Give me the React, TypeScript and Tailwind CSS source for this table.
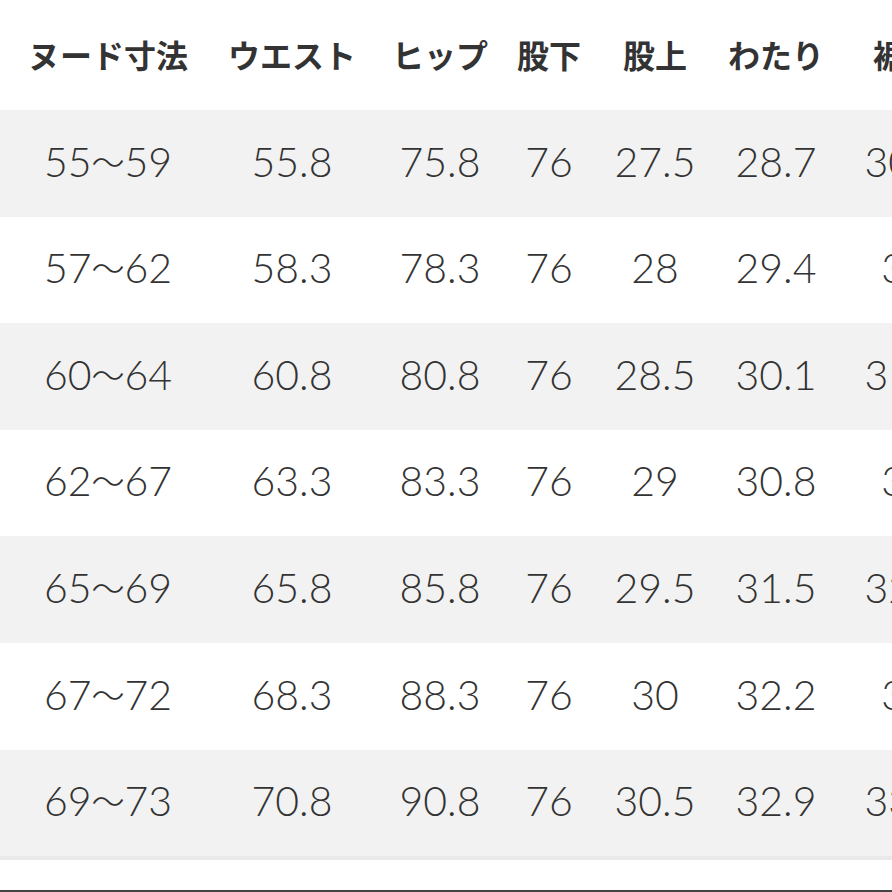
const headers = ['ヌード寸法', 'ウエスト', 'ヒップ', '股下', '股上', 'わたり', '裾幅'];

const rows = [
  ['55〜59', '55.8', '75.8', '76', '27.5', '28.7', '30.5'],
  ['57〜62', '58.3', '78.3', '76', '28', '29.4', '31'],
  ['60〜64', '60.8', '80.8', '76', '28.5', '30.1', '31.5'],
  ['62〜67', '63.3', '83.3', '76', '29', '30.8', '32'],
  ['65〜69', '65.8', '85.8', '76', '29.5', '31.5', '32.5'],
  ['67〜72', '68.3', '88.3', '76', '30', '32.2', '33'],
  ['69〜73', '70.8', '90.8', '76', '30.5', '32.9', '33.5'],
];

const grid = 'grid grid-cols-[216px_152px_144px_74px_138px_104px_154px] w-[982px]';

function Value({text}: {text: string}) {
  const parts = text.split('〜');
  if (parts.length === 1) return <span>{text}</span>;
  return (
    <span>
      {parts[0]}
      <span className="font-['Noto_Sans_CJK_JP'] font-light text-[33px] align-[2px]">〜</span>
      {parts[1]}
    </span>
  );
}

export default function App() {
  return (
    <div className="w-[892px] h-[892px] overflow-hidden bg-white text-[#333]">
      <div className={`${grid} h-[110px] items-center font-['Noto_Sans_CJK_JP',sans-serif] font-bold text-[32px]`}>
        {headers.map((h) => (
          <div key={h} className="text-center whitespace-nowrap pb-[2px]">
            {h}
          </div>
        ))}
      </div>
      <div className="border-b-4 border-[#e9e9e9]">
        {rows.map((r, i) => (
          <div
            key={i}
            className={`${grid} h-[106.6px] items-center font-['Lato',sans-serif] font-light text-[41px] ${
              i % 2 === 0 ? 'bg-[#f2f2f2]' : 'bg-white'
            }`}
          >
            {r.map((v, j) => (
              <div key={j} className="text-center whitespace-nowrap pb-[4px]">
                <Value text={v} />
              </div>
            ))}
          </div>
        ))}
      </div>
      <div className="h-[30px]" />
      <div className="h-[2px] bg-[#444]" />
    </div>
  );
}
